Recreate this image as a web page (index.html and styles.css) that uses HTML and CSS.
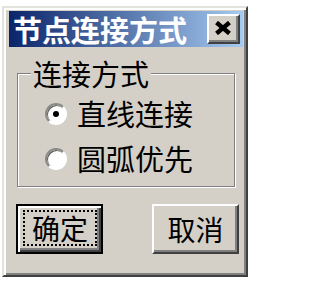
FILE: index.html
```html
<!DOCTYPE html>
<html lang="zh">
<head>
<meta charset="utf-8">
<link rel="stylesheet" href="styles.css">
</head>
<body>
<div class="window">
  <div class="titlebar">
    <span class="title">节点连接方式</span>
    <div class="close">
      <svg width="18" height="14" viewBox="0 0 18 14"><path d="M2.5 1.5 L15.5 12.5 M15.5 1.5 L2.5 12.5" stroke="#000" stroke-width="4.4" fill="none"/></svg>
    </div>
  </div>
  <div class="client">
    <fieldset class="group">
      <legend class="group-label">连接方式</legend>
      <div class="option"><span class="radio checked"></span><span>直线连接</span></div>
      <div class="option"><span class="radio"></span><span>圆弧优先</span></div>
    </fieldset>
    <div class="buttons">
      <div class="btn default"><span class="focus">确定</span></div>
      <div class="btn">取消</div>
    </div>
  </div>
</div>
</body>
</html>
```

FILE: styles.css
```css
html, body {
  margin: 0;
  padding: 0;
  background: #ffffff;
}
body {
  font-family: "Noto Sans CJK SC", "Noto Sans", sans-serif;
  color: #000;
}
.window {
  box-sizing: border-box;
  width: 246px;
  height: 271px;
  margin: 6px 0 0 2px;
  background: #d4d0c8;
  border: 2px solid;
  border-color: #e4e2dc #404040 #404040 #e4e2dc;
  box-shadow: inset 2px 2px 0 #ffffff, inset -2px -2px 0 #808080;
  padding: 3px 3px 0 5px;
}
.titlebar {
  height: 36px;
  display: flex;
  align-items: center;
  justify-content: space-between;
  padding: 0 3px 0 4px;
  background: linear-gradient(to right, #0a246a, #a6caf0);
}
.title {
  color: #fff;
  font-weight: 700;
  font-size: 29px;
  line-height: 36px;
  white-space: nowrap;
}
.close {
  box-sizing: border-box;
  width: 33px;
  height: 30px;
  background: #d4d0c8;
  border: 2px solid;
  border-color: #ffffff #404040 #404040 #ffffff;
  box-shadow: inset -2px -2px 0 #808080;
  display: flex;
  align-items: center;
  justify-content: center;
  padding: 0 1px 2px 0;
}
.close svg { display: block; }
.group {
  margin: 12px 8px 0 8px;
  padding: 3px 0 5px 13px;
  border: 1px solid #808080;
  box-shadow: inset 1px 1px 0 #ffffff, 1px 1px 0 #ffffff;
  min-width: 0;
}
.group-label {
  padding: 0 2px;
  font-size: 29px;
  line-height: 29px;
  background: #d4d0c8;
}
.option {
  display: flex;
  align-items: center;
  gap: 10px;
  height: 45px;
  margin-left: 14px;
  font-size: 29px;
  line-height: 45px;
}
.radio {
  box-sizing: border-box;
  width: 22px;
  height: 22px;
  border-radius: 50%;
  background: #ffffff;
  border: 2px solid;
  border-color: #8c8a86 #ffffff #ffffff #8c8a86;
  box-shadow: inset 1px 1px 0 #5a5a5a;
  display: flex;
  align-items: center;
  justify-content: center;
}
.radio.checked::after {
  content: "";
  width: 6px;
  height: 6px;
  border-radius: 50%;
  background: #000;
}
.buttons {
  display: flex;
  justify-content: space-between;
  margin: 17px 4px 0 7px;
}
.btn {
  box-sizing: border-box;
  width: 87px;
  height: 50px;
  border: 2px solid;
  border-color: #ffffff #404040 #404040 #ffffff;
  box-shadow: inset -2px -2px 0 #808080;
  display: flex;
  align-items: center;
  justify-content: center;
  font-size: 28px;
  line-height: 30px;
}
.btn.default {
  border: 2px solid #000;
  box-shadow: inset 2px 2px 0 #ffffff, inset -2px -2px 0 #404040, inset -4px -4px 0 #808080;
  padding: 4px 4px 6px 5px;
}
.focus {
  box-sizing: border-box;
  flex: 1;
  align-self: stretch;
  border: 2px dotted #000;
  display: flex;
  align-items: center;
  justify-content: center;
}
```
